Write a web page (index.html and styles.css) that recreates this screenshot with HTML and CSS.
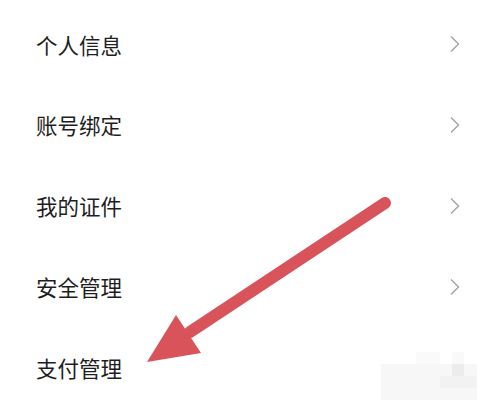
FILE: index.html
```html
<!DOCTYPE html>
<html lang="zh">
<head>
<meta charset="utf-8">
<link rel="stylesheet" href="styles.css">
</head>
<body>
<div class="page">
  <ul class="menu">
    <li class="item"><span class="label">个人信息</span><svg class="chev" width="12" height="18" viewBox="0 0 12 18"><path d="M2 1.5 L9.5 9 L2 16.5" fill="none" stroke="#a3a3a3" stroke-width="1.4"/></svg></li>
    <li class="item"><span class="label">账号绑定</span><svg class="chev" width="12" height="18" viewBox="0 0 12 18"><path d="M2 1.5 L9.5 9 L2 16.5" fill="none" stroke="#a3a3a3" stroke-width="1.4"/></svg></li>
    <li class="item"><span class="label">我的证件</span><svg class="chev" width="12" height="18" viewBox="0 0 12 18"><path d="M2 1.5 L9.5 9 L2 16.5" fill="none" stroke="#a3a3a3" stroke-width="1.4"/></svg></li>
    <li class="item"><span class="label">安全管理</span><svg class="chev" width="12" height="18" viewBox="0 0 12 18"><path d="M2 1.5 L9.5 9 L2 16.5" fill="none" stroke="#a3a3a3" stroke-width="1.4"/></svg></li>
    <li class="item"><span class="label">支付管理</span></li>
  </ul>
  <svg class="overlay" width="496" height="407" viewBox="0 0 496 407">
    <rect x="381" y="364" width="96" height="36" fill="#f7f7f7"/>
    <rect x="416" y="352" width="24" height="12" fill="#fafafa"/>
    <rect x="452" y="352" width="12" height="12" fill="#f9f9f9"/>
    <rect x="452" y="364" width="12" height="12" fill="#ececec"/>
    <rect x="440" y="376" width="36" height="12" fill="#f2f2f2"/>
    <line x1="385" y1="203" x2="190" y2="332" stroke="#d9535a" stroke-width="12" stroke-linecap="round"/>
    <polygon points="147,362 176,315 201,353" fill="#d9535a"/>
  </svg>
</div>
</body>
</html>
```
FILE: styles.css
```css
html, body {
  margin: 0;
  padding: 0;
  background: #ffffff;
}
.page {
  position: relative;
  width: 496px;
  height: 407px;
  overflow: hidden;
}
.menu {
  list-style: none;
  margin: 0;
  padding: 4px 0 0 0;
}
.item {
  height: 80.8px;
  display: flex;
  align-items: center;
  justify-content: space-between;
  padding: 0 35px 0 36px;
}
.label {
  font-family: "Noto Sans CJK SC", "Noto Sans", sans-serif;
  font-size: 21.5px;
  color: #1e1e1e;
  line-height: 1;
}
.chev {
  display: block;
}
.overlay {
  position: absolute;
  left: 0;
  top: 0;
}
```
